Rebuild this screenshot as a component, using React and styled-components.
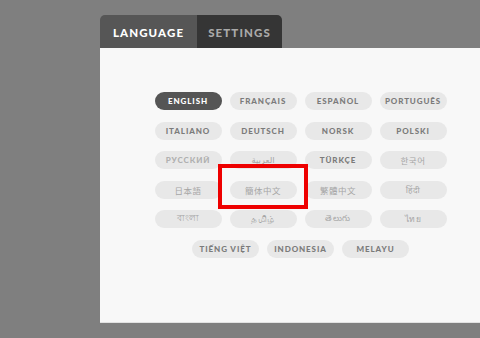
import React from "react";
import styled, { createGlobalStyle } from "styled-components";

const Global = createGlobalStyle`
  html, body { margin: 0; padding: 0; background: #7f7f7f; overflow: hidden; }
  body { font-family: Lato, "Noto Sans", "Noto Sans CJK SC", sans-serif; }
`;

const Page = styled.div`
  width: 480px;
  height: 338px;
  padding: 15px 0 0 100px;
  box-sizing: border-box;
  overflow: hidden;
`;

const Tabs = styled.div`
  display: flex;
  height: 33px;
`;

const Tab = styled.div`
  display: flex;
  align-items: center;
  justify-content: center;
  width: ${(p) => p.$w}px;
  background: ${(p) => (p.$active ? "#565656" : "#353535")};
  color: ${(p) => (p.$active ? "#ffffff" : "#a9a9a9")};
  font-family: Lato, sans-serif;
  font-weight: 900;
  font-size: 11.5px;
  letter-spacing: 1.1px;
  border-radius: ${(p) => (p.$active ? "5px 0 0 0" : "0 5px 0 0")};
  padding-top: 1px;
  box-sizing: border-box;
`;

const Panel = styled.div`
  position: relative;
  width: 400px;
  height: 275px;
  background: #f8f8f8;
  border-bottom: 1px solid #e2e2e2;
  box-sizing: border-box;
  padding-top: 44px;
  display: flex;
  justify-content: center;
`;

const Grid = styled.div`
  width: 293px;
  display: flex;
  flex-wrap: wrap;
  justify-content: center;
  column-gap: 8px;
  row-gap: 11.6px;
  align-content: flex-start;
  padding-left: 1px;
`;

const Pill = styled.div`
  width: 67px;
  height: 18px;
  border-radius: 9px;
  display: flex;
  align-items: center;
  justify-content: center;
  background: ${(p) => (p.$active ? "#555555" : "#e8e8e8")};
  color: ${(p) => (p.$active ? "#ffffff" : p.$script ? "#a6a6a6" : "#7b7b7b")};
  font-family: ${(p) =>
    p.$script
      ? '"DejaVu Sans", "Noto Sans", "Noto Sans CJK SC", sans-serif'
      : "Lato, sans-serif"};
  font-weight: ${(p) => (p.$script ? 400 : 900)};
  font-size: ${(p) => (p.$script ? "8.5px" : "8px")};
  letter-spacing: ${(p) => (p.$script ? "0.5px" : "0.9px")};
  white-space: nowrap;
`;

const LightPill = styled(Pill)`
  color: #b0b0b0;
`;

const Highlight = styled.div`
  position: absolute;
  left: 118px;
  top: 116px;
  width: 90px;
  height: 45px;
  border: 4px solid #ee0000;
  box-sizing: border-box;
  pointer-events: none;
`;

const langs = [
  { t: "ENGLISH", active: true },
  { t: "FRANÇAIS" },
  { t: "ESPAÑOL" },
  { t: "PORTUGUÊS" },
  { t: "ITALIANO" },
  { t: "DEUTSCH" },
  { t: "NORSK" },
  { t: "POLSKI" },
  { t: "РУССКИЙ", light: true },
  { t: "العربية", s: true },
  { t: "TÜRKÇE" },
  { t: "한국어", s: true },
  { t: "日本語", s: true },
  { t: "簡体中文", s: true },
  { t: "繁體中文", s: true },
  { t: "हिंदी", s: true },
  { t: "বাংলা", s: true },
  { t: "தமிழ்", s: true },
  { t: "తెలుగు", s: true },
  { t: "ไทย", s: true },
  { t: "TIẾNG VIỆT" },
  { t: "INDONESIA" },
  { t: "MELAYU" },
];

export default function App() {
  return (
    <>
      <Global />
      <Page>
        <Tabs>
          <Tab $active $w={97}>LANGUAGE</Tab>
          <Tab $w={85}>SETTINGS</Tab>
        </Tabs>
        <Panel>
          <Grid>
            {langs.map((l) =>
              l.light ? (
                <LightPill key={l.t}>{l.t}</LightPill>
              ) : (
                <Pill key={l.t} $active={l.active} $script={l.s}>
                  {l.t}
                </Pill>
              )
            )}
          </Grid>
          <Highlight />
        </Panel>
      </Page>
    </>
  );
}
